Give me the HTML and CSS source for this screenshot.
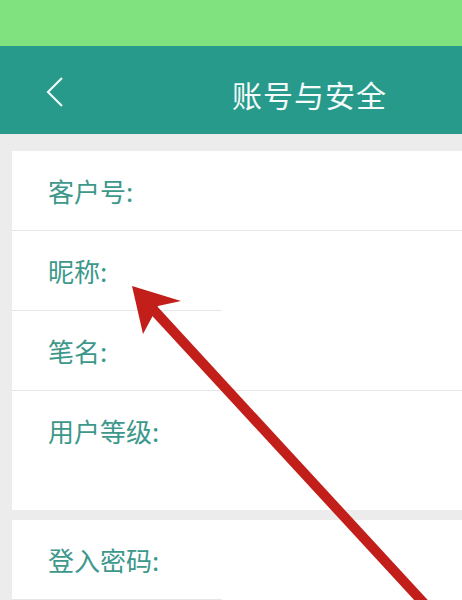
FILE: index.html
```html
<!DOCTYPE html>
<html lang="zh-CN">
<head>
  <meta charset="UTF-8">
  <meta name="viewport" content="width=device-width, initial-scale=1.0">
  <title>账号与安全</title>
  <link rel="stylesheet" href="styles.css">
</head>
<body>
  <div class="screen">
    <div class="status-bar"></div>
    <div class="top-bar">
      <span class="back">
        <svg width="20" height="32" viewBox="0 0 20 32">
          <polyline points="16,3 2,17 16,31" fill="none" stroke="#eef8f6" stroke-width="2.2"/>
        </svg>
      </span>
      <h1 class="title">账号与安全</h1>
    </div>
    <div class="content">
      <div class="card">
        <div class="row">客户号:</div>
        <div class="row row-short">昵称:</div>
        <div class="row">笔名:</div>
        <div class="row row-tall">用户等级:</div>
      </div>
      <div class="card">
        <div class="row row-short">登入密码:</div>
      </div>
    </div>
    <svg class="arrow" width="462" height="600" viewBox="0 0 462 600">
      <line x1="150" y1="306" x2="432" y2="612" stroke="#c21f1b" stroke-width="10"/>
      <polygon points="132,286 181,301 158,306 143,334" fill="#c21f1b"/>
    </svg>
  </div>
</body>
</html>
```

FILE: styles.css
```css
* {
  margin: 0;
  padding: 0;
  box-sizing: border-box;
}

body {
  font-family: "Noto Sans CJK SC", "Noto Sans", sans-serif;
  background-color: #ececec;
}

.screen {
  position: relative;
  width: 462px;
  height: 600px;
  overflow: hidden;
}

.status-bar {
  height: 46px;
  background-color: #80e27f;
}

.top-bar {
  height: 88px;
  background-color: #279a8c;
  display: flex;
  align-items: center;
  padding-left: 46px;
}

.back {
  display: flex;
  margin-top: 2px;
}

.title {
  margin-left: 166px;
  margin-top: 8px;
  font-size: 30px;
  font-weight: normal;
  color: #f4fbfa;
  letter-spacing: 1px;
}

.content {
  padding: 17px 0 0 12px;
  display: flex;
  flex-direction: column;
  gap: 10px;
}

.card {
  background-color: #fff;
}

.row {
  position: relative;
  height: 80px;
  line-height: 79px;
  padding-left: 36px;
  font-size: 26px;
  color: #3d988b;
  border-bottom: 1px solid #e6e6e6;
}

.row-short {
  border-bottom: none;
}

.row-short::after {
  content: "";
  position: absolute;
  left: 0;
  bottom: 0;
  width: 210px;
  height: 1px;
  background-color: #e6e6e6;
}

.row-tall {
  height: 119px;
  border-bottom: none;
}

.arrow {
  position: absolute;
  left: 0;
  top: 0;
}
```
